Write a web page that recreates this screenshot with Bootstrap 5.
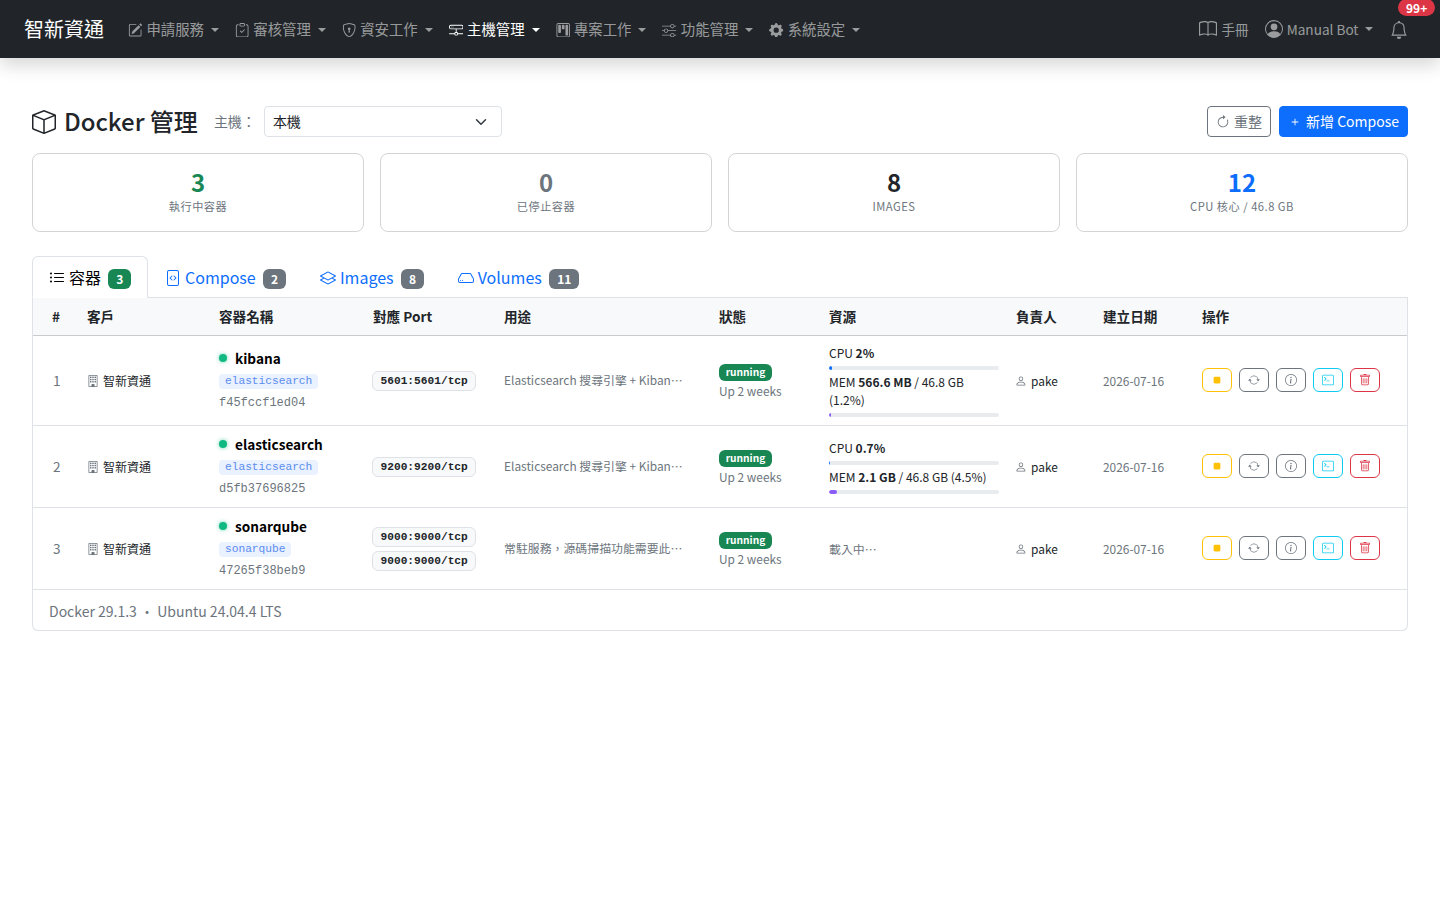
<!DOCTYPE html>
<html lang="zh-Hant">
<head>
  <meta charset="UTF-8">
  <title>Docker 管理</title>
  <meta name="viewport" content="width=device-width, initial-scale=1">
  <link href="https://cdn.jsdelivr.net/npm/bootstrap@5.3.0/dist/css/bootstrap.min.css" rel="stylesheet">
  <style>
    body { font-family: "Noto Sans CJK TC", "Noto Sans", sans-serif; color: #212529; }
    .ico { width: 1em; height: 1em; fill: currentColor; flex: none; vertical-align: -.125em; }

    .top-bar { height: 58px; padding: 0 24px; background: #212529; box-shadow: 0 8px 16px rgba(0,0,0,.15); }
    .top-bar .navbar-brand { font-size: 20px; margin-right: 16px; padding: 0; color: #fff; }
    .top-bar .nav-link { font-size: 14.4px; padding: 8px; color: rgba(255,255,255,.55); white-space: nowrap; }
    .top-bar .nav-link.active { color: #fff; }
    .top-bar .nav-link .ico { margin-right: .8px; }
    .top-bar .side-link { font-size: 13.6px; }
    .top-bar .side-link .ico { font-size: 18px; margin-right: 1px; vertical-align: -.2em; }
    .alert-count { position: absolute; top: -12px; left: 16px; font-size: 12px; font-weight: 700; padding: 1px 8px; line-height: 15px; border-radius: 10px; background: #dc3545; color: #fff; }
    .bell-wrap { position: relative; padding: 8px; margin-left: 1px; color: rgba(255,255,255,.55); font-size: 18px; line-height: 1; }

    .page-main { padding: 48px 32px 0; }
    .page-title { font-size: 24px; font-weight: 500; margin: -2px 0 0; line-height: 31px; }
    .page-title .ico { margin-right: 2.5px; }
    .host-label { font-size: 14px; color: #6c757d; margin: 0 8px 0 16px; }
    .host-select { width: 238px; }
    .btn-ico { font-size: 14px; margin-right: 4px; }
    .stat-box { border: 1px solid #d3d4d5; border-radius: 8px; text-align: center; height: 79px; padding-top: 13px; }
    .stat-num { font-size: 24px; font-weight: 700; line-height: 30px; }
    .stat-label { font-size: 11.2px; letter-spacing: .5px; color: #6c757d; line-height: 16px; margin-top: 1px; }

    .nav-tabs .nav-link { padding: 8px 16px; }
    .nav-tabs .nav-link .ico { margin-right: .3px; }

    .panel-box { border: 1px solid #dee2e6; border-top: 0; border-radius: 0 0 6px 6px; }
    .ctable { table-layout: fixed; width: 100%; margin: 0; font-size: 11.9px; }
    .ctable th { background: #f8f9fa; font-size: 13.6px; font-weight: 700; padding: 8px 12px; border-bottom: 1px solid #c9cccf; line-height: 21px; white-space: nowrap; }
    .ctable td { padding: 8px 12px; vertical-align: middle; border-bottom: 1px solid #dee2e6; }
    .ctable th:first-child { padding-left: 19px; }
    .ctable td:first-child { padding-left: 20px; }
    .ctable td.state-cell { padding-top: 10px; }
    .ctable td.use-cell, .ctable td.act-cell { padding-bottom: 10px; }
    .c1 { width: 42px; } .c2 { width: 132px; } .c3 { width: 154px; } .c4 { width: 131px; } .c5 { width: 215px; }
    .c6 { width: 110px; } .c7 { width: 187px; } .c8 { width: 87px; } .c9 { width: 99px; }
    .row-no { font-size: 13.6px; color: #6c757d; }
    .client-cell { font-size: 12px; }
    .client-cell .ico { color: #6c757d; margin-right: 4px; }
    .run-dot { width: 8px; height: 8px; border-radius: 50%; background: #10b981; box-shadow: 0 0 4px rgba(16,185,129,.6); margin-right: 8px; }
    .svc-name { font-size: 13.6px; font-weight: 700; line-height: 20px; color: #000; margin-bottom: 2px; }
    .svc-tag { display: inline-block; font-family: "Liberation Mono", monospace; font-size: 11.2px; line-height: 15px; padding: 0 6px; border-radius: 4px; background: #eaf1ff; color: #5b8def; }
    .svc-id { font-family: "Liberation Mono", monospace; font-size: 12px; color: #6c757d; line-height: 20px; margin-top: 4px; }
    .port-tag { display: block; width: fit-content; margin-left: -1px; font-family: "Liberation Mono", monospace; font-size: 11.2px; font-weight: 700; line-height: 18px; padding: 0 7.5px; border: 1px solid #dee2e6; border-radius: 6px; background: #f8f9fa; }
    .port-tag + .port-tag { margin-top: 4px; }
    .use-text { max-width: 180px; color: #6c757d; }
    .state-tag { font-size: 10.2px; }
    .up-text { color: #6c757d; line-height: 20px; }
    .res-wrap { width: 170px; font-size: 12px; line-height: 18px; }
    .res-bar { height: 4px; background: #e9ecef; border-radius: 2px; margin: 4px 0 3px; overflow: hidden; }
    .res-bar:last-child { margin-bottom: 0; }
    .res-bar > div { height: 100%; border-radius: 2px; }
    .fill-cpu { background: #0d6efd; }
    .fill-mem { background: #8b5cf6; }
    .loading-text { color: #6c757d; }
    .person-cell .ico { color: #6c757d; margin-left: -1px; margin-right: 1.5px; }
    .date-text { color: #6c757d; }
    .act-group { gap: 7px; }
    .act-btn { width: 30px; height: 24px; padding: 0; display: flex; align-items: center; justify-content: center; font-size: 12px; border-radius: 6px; }
    .panel-foot { padding: 11px 16px 9px; font-size: 14px; line-height: 20px; color: #6c757d; }
  </style>
</head>
<body>
  <!-- icon sprite -->
  <svg class="d-none" xmlns="http://www.w3.org/2000/svg">
    <symbol id="i-pencil" viewBox="0 0 16 16"><path d="M15.502 1.94a.5.5 0 0 1 0 .706L14.459 3.69l-2-2L13.502.646a.5.5 0 0 1 .707 0l1.293 1.293zm-1.75 2.456-2-2L4.939 9.21a.5.5 0 0 0-.121.196l-.805 2.414a.25.25 0 0 0 .316.316l2.414-.805a.5.5 0 0 0 .196-.12l6.813-6.814z"/><path d="M1 13.5A1.5 1.5 0 0 0 2.5 15h11a1.5 1.5 0 0 0 1.5-1.5v-6a.5.5 0 0 0-1 0v6a.5.5 0 0 1-.5.5h-11a.5.5 0 0 1-.5-.5v-11a.5.5 0 0 1 .5-.5H9a.5.5 0 0 0 0-1H2.5A1.5 1.5 0 0 0 1 2.5z"/></symbol>
    <symbol id="i-clip" viewBox="0 0 16 16"><path d="M10.854 7.146a.5.5 0 0 1 0 .708l-3 3a.5.5 0 0 1-.708 0l-1.5-1.5a.5.5 0 1 1 .708-.708L7.5 9.793l2.646-2.647a.5.5 0 0 1 .708 0"/><path d="M4 1.5H3a2 2 0 0 0-2 2V14a2 2 0 0 0 2 2h10a2 2 0 0 0 2-2V3.5a2 2 0 0 0-2-2h-1v1h1a1 1 0 0 1 1 1V14a1 1 0 0 1-1 1H3a1 1 0 0 1-1-1V3.5a1 1 0 0 1 1-1h1z"/><path d="M9.5 1a.5.5 0 0 1 .5.5v1a.5.5 0 0 1-.5.5h-3a.5.5 0 0 1-.5-.5v-1a.5.5 0 0 1 .5-.5zm-3-1A1.5 1.5 0 0 0 5 1.5v1A1.5 1.5 0 0 0 6.5 4h3A1.5 1.5 0 0 0 11 2.5v-1A1.5 1.5 0 0 0 9.5 0z"/></symbol>
    <symbol id="i-shield" viewBox="0 0 16 16"><path d="M5.338 1.59a61 61 0 0 0-2.837.856.48.48 0 0 0-.328.39c-.554 4.157.726 7.19 2.253 9.188a10.7 10.7 0 0 0 2.287 2.233c.346.244.652.42.893.533q.18.085.293.118a1 1 0 0 0 .101.025 1 1 0 0 0 .1-.025q.114-.034.294-.118c.24-.113.547-.29.893-.533a10.7 10.7 0 0 0 2.287-2.233c1.527-1.997 2.807-5.031 2.253-9.188a.48.48 0 0 0-.328-.39c-.651-.213-1.75-.56-2.837-.855C9.552 1.29 8.531 1.067 8 1.067c-.53 0-1.552.223-2.662.524zM5.072.56C6.157.265 7.31 0 8 0s1.843.265 2.928.56c1.11.3 2.229.655 2.887.87a1.54 1.54 0 0 1 1.044 1.262c.596 4.477-.787 7.795-2.465 9.99a11.8 11.8 0 0 1-2.517 2.453 7 7 0 0 1-1.048.625c-.28.132-.581.24-.829.24s-.548-.108-.829-.24a7 7 0 0 1-1.048-.625 11.8 11.8 0 0 1-2.517-2.453C1.928 10.487.545 7.169 1.141 2.692A1.54 1.54 0 0 1 2.185 1.43 63 63 0 0 1 5.072.56"/><path d="M9.5 6.5a1.5 1.5 0 0 1-1 1.415l.385 1.99a.5.5 0 0 1-.491.595h-.788a.5.5 0 0 1-.49-.595l.384-1.99a1.5 1.5 0 1 1 2-1.415"/></symbol>
    <symbol id="i-hddnet" viewBox="0 0 16 16"><path d="M4.5 5a.5.5 0 1 0 0-1 .5.5 0 0 0 0 1M3 4.5a.5.5 0 1 1-1 0 .5.5 0 0 1 1 0"/><path d="M0 4a2 2 0 0 1 2-2h12a2 2 0 0 1 2 2v1a2 2 0 0 1-2 2H8.5v3a1.5 1.5 0 0 1 1.5 1.5h5.5a.5.5 0 0 1 0 1H10A1.5 1.5 0 0 1 8.5 14h-1A1.5 1.5 0 0 1 6 12.5H.5a.5.5 0 0 1 0-1H6A1.5 1.5 0 0 1 7.5 10V7H2a2 2 0 0 1-2-2zm1 0v1a1 1 0 0 0 1 1h12a1 1 0 0 0 1-1V4a1 1 0 0 0-1-1H2a1 1 0 0 0-1 1m6 7.5v1a.5.5 0 0 0 .5.5h1a.5.5 0 0 0 .5-.5v-1a.5.5 0 0 0-.5-.5h-1a.5.5 0 0 0-.5.5"/></symbol>
    <symbol id="i-kanban" viewBox="0 0 16 16"><path d="M13.5 1a1 1 0 0 1 1 1v12a1 1 0 0 1-1 1h-11a1 1 0 0 1-1-1V2a1 1 0 0 1 1-1zm-11-1a2 2 0 0 0-2 2v12a2 2 0 0 0 2 2h11a2 2 0 0 0 2-2V2a2 2 0 0 0-2-2z"/><path d="M6.5 3a1 1 0 0 1 1-1h1a1 1 0 0 1 1 1v3a1 1 0 0 1-1 1h-1a1 1 0 0 1-1-1zm-4 0a1 1 0 0 1 1-1h1a1 1 0 0 1 1 1v7a1 1 0 0 1-1 1h-1a1 1 0 0 1-1-1zm8 0a1 1 0 0 1 1-1h1a1 1 0 0 1 1 1v10a1 1 0 0 1-1 1h-1a1 1 0 0 1-1-1z"/></symbol>
    <symbol id="i-sliders" viewBox="0 0 16 16"><path d="M11.5 2a1.5 1.5 0 1 0 0 3 1.5 1.5 0 0 0 0-3M9.05 3a2.5 2.5 0 0 1 4.9 0H16v1h-2.05a2.5 2.5 0 0 1-4.9 0H0V3zM4.5 7a1.5 1.5 0 1 0 0 3 1.5 1.5 0 0 0 0-3M2.05 8a2.5 2.5 0 0 1 4.9 0H16v1H6.95a2.5 2.5 0 0 1-4.9 0H0V8zm9.45 4a1.5 1.5 0 1 0 0 3 1.5 1.5 0 0 0 0-3m-2.45 1a2.5 2.5 0 0 1 4.9 0H16v1h-2.05a2.5 2.5 0 0 1-4.9 0H0v-1z"/></symbol>
    <symbol id="i-gear" viewBox="0 0 16 16"><path d="M9.405 1.05c-.413-1.4-2.397-1.4-2.81 0l-.1.34a1.464 1.464 0 0 1-2.105.872l-.31-.17c-1.283-.698-2.686.705-1.987 1.987l.169.311c.446.82.023 1.841-.872 2.105l-.34.1c-1.4.413-1.4 2.397 0 2.81l.34.1a1.464 1.464 0 0 1 .872 2.105l-.17.31c-.698 1.283.705 2.686 1.987 1.987l.311-.169a1.464 1.464 0 0 1 2.105.872l.1.34c.413 1.4 2.397 1.4 2.81 0l.1-.34a1.464 1.464 0 0 1 2.105-.872l.31.17c1.283.698 2.686-.705 1.987-1.987l-.169-.311a1.464 1.464 0 0 1 .872-2.105l.34-.1c1.4-.413 1.4-2.397 0-2.81l-.34-.1a1.464 1.464 0 0 1-.872-2.105l.17-.31c.698-1.283-.705-2.686-1.987-1.987l-.311.169a1.464 1.464 0 0 1-2.105-.872zM8 10.93a2.929 2.929 0 1 1 0-5.86 2.929 2.929 0 0 1 0 5.858z"/></symbol>
    <symbol id="i-book" viewBox="0 0 16 16"><path d="M1 2.828c.885-.37 2.154-.769 3.388-.893 1.33-.134 2.458.063 3.112.752v9.746c-.935-.53-2.12-.603-3.213-.493-1.18.12-2.37.461-3.287.811zm7.5-.141c.654-.689 1.782-.886 3.112-.752 1.234.124 2.503.523 3.388.893v9.923c-.918-.35-2.107-.692-3.287-.81-1.094-.111-2.278-.039-3.213.492zM8 1.783C7.015.936 5.587.81 4.287.94c-1.514.153-3.042.672-3.994 1.105A.5.5 0 0 0 0 2.5v11a.5.5 0 0 0 .707.455c.882-.4 2.303-.881 3.68-1.02 1.409-.142 2.59.087 3.223.877a.5.5 0 0 0 .78 0c.633-.79 1.814-1.019 3.222-.877 1.378.139 2.8.62 3.681 1.02A.5.5 0 0 0 16 13.5v-11a.5.5 0 0 0-.293-.455c-.952-.433-2.48-.952-3.994-1.105C10.413.809 8.985.936 8 1.783"/></symbol>
    <symbol id="i-user" viewBox="0 0 16 16"><path d="M11 6a3 3 0 1 1-6 0 3 3 0 0 1 6 0"/><path d="M0 8a8 8 0 1 1 16 0A8 8 0 0 1 0 8m8-7a7 7 0 0 0-5.468 11.37C3.242 11.226 4.805 10 8 10s4.757 1.225 5.468 2.37A7 7 0 0 0 8 1"/></symbol>
    <symbol id="i-bell" viewBox="0 0 16 16"><path d="M8 16a2 2 0 0 0 2-2H6a2 2 0 0 0 2 2M8 1.918l-.797.161A4 4 0 0 0 4 6c0 .628-.134 2.197-.459 3.742-.16.767-.376 1.566-.663 2.258h10.244c-.287-.692-.502-1.49-.663-2.258C12.134 8.197 12 6.628 12 6a4 4 0 0 0-3.203-3.92zM14.22 12c.223.447.481.801.78 1H1c.299-.199.557-.553.78-1C2.68 10.2 3 6.88 3 6c0-2.42 1.72-4.44 4.005-4.901a1 1 0 1 1 1.99 0A5 5 0 0 1 13 6c0 .88.32 4.2 1.22 6"/></symbol>
    <symbol id="i-box" viewBox="0 0 16 16"><path d="M8.186 1.113a.5.5 0 0 0-.372 0L1.846 3.5 8 5.961 14.154 3.5zM15 4.239l-6.5 2.6v7.922l6.5-2.6V4.24zM7.5 14.762V6.838L1 4.239v7.925zM7.443.184a1.5 1.5 0 0 1 1.114 0l7.129 2.852A.5.5 0 0 1 16 3.5v8.662a1 1 0 0 1-.629.928l-7.185 2.874a.5.5 0 0 1-.372 0L.63 13.09a1 1 0 0 1-.63-.928V3.5a.5.5 0 0 1 .314-.464z"/></symbol>
    <symbol id="i-clock" viewBox="0 0 16 16"><path d="M8 3a5 5 0 1 0 4.546 2.914.5.5 0 0 1 .908-.417A6 6 0 1 1 8 2z"/><path d="M8 4.466V.534a.25.25 0 0 1 .41-.192l2.36 1.966c.12.1.12.284 0 .384L8.41 4.658A.25.25 0 0 1 8 4.466"/></symbol>
    <symbol id="i-plus" viewBox="0 0 16 16"><path d="M8 4a.5.5 0 0 1 .5.5v3h3a.5.5 0 0 1 0 1h-3v3a.5.5 0 0 1-1 0v-3h-3a.5.5 0 0 1 0-1h3v-3A.5.5 0 0 1 8 4"/></symbol>
    <symbol id="i-list" viewBox="0 0 16 16"><path d="M5 11.5a.5.5 0 0 1 .5-.5h9a.5.5 0 0 1 0 1h-9a.5.5 0 0 1-.5-.5m0-4a.5.5 0 0 1 .5-.5h9a.5.5 0 0 1 0 1h-9a.5.5 0 0 1-.5-.5m0-4a.5.5 0 0 1 .5-.5h9a.5.5 0 0 1 0 1h-9a.5.5 0 0 1-.5-.5m-3 1a1 1 0 1 0 0-2 1 1 0 0 0 0 2m0 4a1 1 0 1 0 0-2 1 1 0 0 0 0 2m0 4a1 1 0 1 0 0-2 1 1 0 0 0 0 2"/></symbol>
    <symbol id="i-filecode" viewBox="0 0 16 16"><path d="M6.646 5.646a.5.5 0 1 1 .708.708L5.707 8l1.647 1.646a.5.5 0 0 1-.708.708l-2-2a.5.5 0 0 1 0-.708zm2.708 0a.5.5 0 1 0-.708.708L10.293 8 8.646 9.646a.5.5 0 0 0 .708.708l2-2a.5.5 0 0 0 0-.708z"/><path d="M2 2a2 2 0 0 1 2-2h8a2 2 0 0 1 2 2v12a2 2 0 0 1-2 2H4a2 2 0 0 1-2-2zm10-1H4a1 1 0 0 0-1 1v12a1 1 0 0 0 1 1h8a1 1 0 0 0 1-1V2a1 1 0 0 0-1-1"/></symbol>
    <symbol id="i-layers" viewBox="0 0 16 16"><path d="M8.235 1.559a.5.5 0 0 0-.47 0l-7.5 4a.5.5 0 0 0 0 .882L3.188 8 .264 9.559a.5.5 0 0 0 0 .882l7.5 4a.5.5 0 0 0 .47 0l7.5-4a.5.5 0 0 0 0-.882L12.813 8l2.922-1.559a.5.5 0 0 0 0-.882zm3.515 7.008L14.438 10 8 13.433 1.562 10 4.25 8.567l3.515 1.874a.5.5 0 0 0 .47 0zM8 9.433 1.562 6 8 2.567 14.438 6z"/></symbol>
    <symbol id="i-hdd" viewBox="0 0 16 16"><path d="M4.5 11a.5.5 0 1 0 0-1 .5.5 0 0 0 0 1M3 10.5a.5.5 0 1 1-1 0 .5.5 0 0 1 1 0"/><path fill-rule="evenodd" d="M16 11a2 2 0 0 1-2 2H2a2 2 0 0 1-2-2V9.51c0-.418.105-.83.305-1.197l2.472-4.531A1.5 1.5 0 0 1 4.094 3h7.812a1.5 1.5 0 0 1 1.317.782l2.472 4.53c.2.368.305.78.305 1.198zM3.655 4.26 1.592 8.043Q1.79 8 2 8h12c.14 0 .278.014.408.042L12.345 4.26a.5.5 0 0 0-.439-.26H4.094a.5.5 0 0 0-.44.26zM1 9v2a1 1 0 0 0 1 1h12a1 1 0 0 0 1-1V9a1 1 0 0 0-1-1H2a1 1 0 0 0-1 1"/></symbol>
    <symbol id="i-building" viewBox="0 0 16 16"><path d="M4 2.5a.5.5 0 0 1 .5-.5h1a.5.5 0 0 1 .5.5v1a.5.5 0 0 1-.5.5h-1a.5.5 0 0 1-.5-.5zm3 0a.5.5 0 0 1 .5-.5h1a.5.5 0 0 1 .5.5v1a.5.5 0 0 1-.5.5h-1a.5.5 0 0 1-.5-.5zm3.5-.5a.5.5 0 0 0-.5.5v1a.5.5 0 0 0 .5.5h1a.5.5 0 0 0 .5-.5v-1a.5.5 0 0 0-.5-.5zM4 5.5a.5.5 0 0 1 .5-.5h1a.5.5 0 0 1 .5.5v1a.5.5 0 0 1-.5.5h-1a.5.5 0 0 1-.5-.5zM7.5 5a.5.5 0 0 0-.5.5v1a.5.5 0 0 0 .5.5h1a.5.5 0 0 0 .5-.5v-1a.5.5 0 0 0-.5-.5zm2.5.5a.5.5 0 0 1 .5-.5h1a.5.5 0 0 1 .5.5v1a.5.5 0 0 1-.5.5h-1a.5.5 0 0 1-.5-.5zM4.5 8a.5.5 0 0 0-.5.5v1a.5.5 0 0 0 .5.5h1a.5.5 0 0 0 .5-.5v-1a.5.5 0 0 0-.5-.5zm2.5.5a.5.5 0 0 1 .5-.5h1a.5.5 0 0 1 .5.5v1a.5.5 0 0 1-.5.5h-1a.5.5 0 0 1-.5-.5zm3.5-.5a.5.5 0 0 0-.5.5v1a.5.5 0 0 0 .5.5h1a.5.5 0 0 0 .5-.5v-1a.5.5 0 0 0-.5-.5z"/><path d="M2 1a1 1 0 0 1 1-1h10a1 1 0 0 1 1 1v14a1 1 0 0 1-1 1H3a1 1 0 0 1-1-1zm11 0H3v14h3v-2.5a.5.5 0 0 1 .5-.5h3a.5.5 0 0 1 .5.5V15h3z"/></symbol>
    <symbol id="i-person" viewBox="0 0 16 16"><path d="M8 8a3 3 0 1 0 0-6 3 3 0 0 0 0 6m2-3a2 2 0 1 1-4 0 2 2 0 0 1 4 0m4 8c0 1-1 1-1 1H3s-1 0-1-1 1-4 6-4 6 3 6 4m-1-.004c-.001-.246-.154-.986-.832-1.664C11.516 10.68 10.289 10 8 10s-3.516.68-4.168 1.332c-.678.678-.83 1.418-.832 1.664z"/></symbol>
    <symbol id="i-stop" viewBox="0 0 16 16"><path d="M5 3.5h6A1.5 1.5 0 0 1 12.5 5v6a1.5 1.5 0 0 1-1.5 1.5H5A1.5 1.5 0 0 1 3.5 11V5A1.5 1.5 0 0 1 5 3.5"/></symbol>
    <symbol id="i-repeat" viewBox="0 0 16 16"><path d="M11.534 7h3.932a.25.25 0 0 1 .192.41l-1.966 2.36a.25.25 0 0 1-.384 0l-1.966-2.36a.25.25 0 0 1 .192-.41m-11 2h3.932a.25.25 0 0 0 .192-.41L2.692 6.23a.25.25 0 0 0-.384 0L.342 8.59A.25.25 0 0 0 .534 9"/><path d="M8 3c-1.552 0-2.94.707-3.857 1.818a.5.5 0 1 1-.771-.636A6.002 6.002 0 0 1 13.917 7H12.9A5 5 0 0 0 8 3M3.1 9a5.002 5.002 0 0 0 8.757 2.182.5.5 0 1 1 .771.636A6.002 6.002 0 0 1 2.083 9z"/></symbol>
    <symbol id="i-info" viewBox="0 0 16 16"><path d="M8 15A7 7 0 1 1 8 1a7 7 0 0 1 0 14m0 1A8 8 0 1 0 8 0a8 8 0 0 0 0 16"/><path d="m8.93 6.588-2.29.287-.082.38.45.083c.294.07.352.176.288.469l-.738 3.468c-.194.897.105 1.319.808 1.319.545 0 1.178-.252 1.465-.598l.088-.416c-.2.176-.492.246-.686.246-.275 0-.375-.193-.304-.533zM9 4.5a1 1 0 1 1-2 0 1 1 0 0 1 2 0"/></symbol>
    <symbol id="i-term" viewBox="0 0 16 16"><path d="M6 9a.5.5 0 0 1 .5-.5h3a.5.5 0 0 1 0 1h-3A.5.5 0 0 1 6 9M3.854 4.146a.5.5 0 1 0-.708.708L4.793 6.5 3.146 8.146a.5.5 0 1 0 .708.708l2-2a.5.5 0 0 0 0-.708z"/><path d="M2 1a2 2 0 0 0-2 2v10a2 2 0 0 0 2 2h12a2 2 0 0 0 2-2V3a2 2 0 0 0-2-2zm12 1a1 1 0 0 1 1 1v10a1 1 0 0 1-1 1H2a1 1 0 0 1-1-1V3a1 1 0 0 1 1-1z"/></symbol>
    <symbol id="i-trash" viewBox="0 0 16 16"><path d="M5.5 5.5A.5.5 0 0 1 6 6v6a.5.5 0 0 1-1 0V6a.5.5 0 0 1 .5-.5m2.5 0a.5.5 0 0 1 .5.5v6a.5.5 0 0 1-1 0V6a.5.5 0 0 1 .5-.5m3 .5a.5.5 0 0 0-1 0v6a.5.5 0 0 0 1 0z"/><path d="M14.5 3a1 1 0 0 1-1 1H13v9a2 2 0 0 1-2 2H5a2 2 0 0 1-2-2V4h-.5a1 1 0 0 1-1-1V2a1 1 0 0 1 1-1H6a1 1 0 0 1 1-1h2a1 1 0 0 1 1 1h3.5a1 1 0 0 1 1 1zM4.118 4 4 4.059V13a1 1 0 0 0 1 1h6a1 1 0 0 0 1-1V4.059L11.882 4zM2.5 3h11V2h-11z"/></symbol>
  </svg>

  <nav class="navbar navbar-expand top-bar">
    <a class="navbar-brand" href="#">智新資通</a>
    <ul class="navbar-nav me-auto">
      <li class="nav-item"><a class="nav-link dropdown-toggle" href="#"><svg class="ico"><use href="#i-pencil"/></svg> 申請服務 </a></li>
      <li class="nav-item"><a class="nav-link dropdown-toggle" href="#"><svg class="ico"><use href="#i-clip"/></svg> 審核管理 </a></li>
      <li class="nav-item"><a class="nav-link dropdown-toggle" href="#"><svg class="ico"><use href="#i-shield"/></svg> 資安工作 </a></li>
      <li class="nav-item"><a class="nav-link dropdown-toggle active" href="#"><svg class="ico"><use href="#i-hddnet"/></svg> 主機管理 </a></li>
      <li class="nav-item"><a class="nav-link dropdown-toggle" href="#"><svg class="ico"><use href="#i-kanban"/></svg> 專案工作 </a></li>
      <li class="nav-item"><a class="nav-link dropdown-toggle" href="#"><svg class="ico"><use href="#i-sliders"/></svg> 功能管理 </a></li>
      <li class="nav-item"><a class="nav-link dropdown-toggle" href="#"><svg class="ico"><use href="#i-gear"/></svg> 系統設定 </a></li>
    </ul>
    <ul class="navbar-nav align-items-center">
      <li class="nav-item"><a class="nav-link side-link" href="#"><svg class="ico"><use href="#i-book"/></svg> 手冊</a></li>
      <li class="nav-item"><a class="nav-link side-link dropdown-toggle" href="#"><svg class="ico"><use href="#i-user"/></svg> Manual Bot </a></li>
      <li class="nav-item bell-wrap"><svg class="ico"><use href="#i-bell"/></svg><span class="alert-count">99+</span></li>
    </ul>
  </nav>

  <main class="page-main">
    <div class="d-flex align-items-center justify-content-between mb-3">
      <div class="d-flex align-items-center">
        <h1 class="page-title"><svg class="ico"><use href="#i-box"/></svg> Docker 管理</h1>
        <span class="host-label">主機：</span>
        <select class="form-select form-select-sm host-select"><option>本機</option></select>
      </div>
      <div class="d-flex gap-2">
        <button class="btn btn-sm btn-outline-secondary"><svg class="ico btn-ico"><use href="#i-clock"/></svg>重整</button>
        <button class="btn btn-sm btn-primary"><svg class="ico btn-ico"><use href="#i-plus"/></svg>新增 Compose</button>
      </div>
    </div>

    <div class="row g-3 mb-4">
      <div class="col-3"><div class="stat-box"><div class="stat-num text-success">3</div><div class="stat-label">執行中容器</div></div></div>
      <div class="col-3"><div class="stat-box"><div class="stat-num text-secondary">0</div><div class="stat-label">已停止容器</div></div></div>
      <div class="col-3"><div class="stat-box"><div class="stat-num">8</div><div class="stat-label">IMAGES</div></div></div>
      <div class="col-3"><div class="stat-box"><div class="stat-num text-primary">12</div><div class="stat-label">CPU 核心 / 46.8 GB</div></div></div>
    </div>

    <ul class="nav nav-tabs">
      <li class="nav-item"><a class="nav-link active" href="#"><svg class="ico"><use href="#i-list"/></svg> 容器 <span class="badge bg-success ms-1">3</span></a></li>
      <li class="nav-item"><a class="nav-link" href="#"><svg class="ico"><use href="#i-filecode"/></svg> Compose <span class="badge bg-secondary ms-1">2</span></a></li>
      <li class="nav-item"><a class="nav-link" href="#"><svg class="ico"><use href="#i-layers"/></svg> Images <span class="badge bg-secondary ms-1">8</span></a></li>
      <li class="nav-item"><a class="nav-link" href="#"><svg class="ico"><use href="#i-hdd"/></svg> Volumes <span class="badge bg-secondary ms-1">11</span></a></li>
    </ul>

    <div class="panel-box">
      <table class="ctable">
        <thead>
          <tr>
            <th class="c1">#</th><th class="c2">客戶</th><th class="c3">容器名稱</th><th class="c4">對應 Port</th><th class="c5">用途</th>
            <th class="c6">狀態</th><th class="c7">資源</th><th class="c8">負責人</th><th class="c9">建立日期</th><th>操作</th>
          </tr>
        </thead>
        <tbody>
          <tr>
            <td class="row-no">1</td>
            <td class="client-cell"><svg class="ico"><use href="#i-building"/></svg>智新資通</td>
            <td>
              <div class="d-flex align-items-center svc-name"><span class="run-dot"></span>kibana</div>
              <span class="svc-tag">elasticsearch</span>
              <div class="svc-id">f45fccf1ed04</div>
            </td>
            <td><span class="port-tag">5601:5601/tcp</span></td>
            <td class="use-cell"><div class="text-truncate use-text">Elasticsearch 搜尋引擎 + Kibana 介面</div></td>
            <td class="state-cell"><span class="badge bg-success state-tag">running</span><div class="up-text">Up 2 weeks</div></td>
            <td>
              <div class="res-wrap">
                <div>CPU <b>2%</b></div>
                <div class="res-bar"><div class="fill-cpu" style="width:2%"></div></div>
                <div>MEM <b>566.6 MB</b> / 46.8 GB (1.2%)</div>
                <div class="res-bar"><div class="fill-mem" style="width:1.2%"></div></div>
              </div>
            </td>
            <td class="person-cell"><svg class="ico"><use href="#i-person"/></svg> pake</td>
            <td class="date-text">2026-07-16</td>
            <td class="act-cell">
              <div class="d-flex act-group">
                <button class="btn btn-outline-warning act-btn"><svg class="ico"><use href="#i-stop"/></svg></button>
                <button class="btn btn-outline-secondary act-btn"><svg class="ico"><use href="#i-repeat"/></svg></button>
                <button class="btn btn-outline-secondary act-btn"><svg class="ico"><use href="#i-info"/></svg></button>
                <button class="btn btn-outline-info act-btn"><svg class="ico"><use href="#i-term"/></svg></button>
                <button class="btn btn-outline-danger act-btn"><svg class="ico"><use href="#i-trash"/></svg></button>
              </div>
            </td>
          </tr>
          <tr>
            <td class="row-no">2</td>
            <td class="client-cell"><svg class="ico"><use href="#i-building"/></svg>智新資通</td>
            <td>
              <div class="d-flex align-items-center svc-name"><span class="run-dot"></span>elasticsearch</div>
              <span class="svc-tag">elasticsearch</span>
              <div class="svc-id">d5fb37696825</div>
            </td>
            <td><span class="port-tag">9200:9200/tcp</span></td>
            <td class="use-cell"><div class="text-truncate use-text">Elasticsearch 搜尋引擎 + Kibana 介面</div></td>
            <td class="state-cell"><span class="badge bg-success state-tag">running</span><div class="up-text">Up 2 weeks</div></td>
            <td>
              <div class="res-wrap">
                <div>CPU <b>0.7%</b></div>
                <div class="res-bar"><div class="fill-cpu" style="width:.7%"></div></div>
                <div>MEM <b>2.1 GB</b> / 46.8 GB (4.5%)</div>
                <div class="res-bar"><div class="fill-mem" style="width:4.5%"></div></div>
              </div>
            </td>
            <td class="person-cell"><svg class="ico"><use href="#i-person"/></svg> pake</td>
            <td class="date-text">2026-07-16</td>
            <td class="act-cell">
              <div class="d-flex act-group">
                <button class="btn btn-outline-warning act-btn"><svg class="ico"><use href="#i-stop"/></svg></button>
                <button class="btn btn-outline-secondary act-btn"><svg class="ico"><use href="#i-repeat"/></svg></button>
                <button class="btn btn-outline-secondary act-btn"><svg class="ico"><use href="#i-info"/></svg></button>
                <button class="btn btn-outline-info act-btn"><svg class="ico"><use href="#i-term"/></svg></button>
                <button class="btn btn-outline-danger act-btn"><svg class="ico"><use href="#i-trash"/></svg></button>
              </div>
            </td>
          </tr>
          <tr>
            <td class="row-no">3</td>
            <td class="client-cell"><svg class="ico"><use href="#i-building"/></svg>智新資通</td>
            <td>
              <div class="d-flex align-items-center svc-name"><span class="run-dot"></span>sonarqube</div>
              <span class="svc-tag">sonarqube</span>
              <div class="svc-id">47265f38beb9</div>
            </td>
            <td><span class="port-tag">9000:9000/tcp</span><span class="port-tag">9000:9000/tcp</span></td>
            <td class="use-cell"><div class="text-truncate use-text">常駐服務，源碼掃描功能需要此服務運作</div></td>
            <td class="state-cell"><span class="badge bg-success state-tag">running</span><div class="up-text">Up 2 weeks</div></td>
            <td class="loading-text">載入中⋯</td>
            <td class="person-cell"><svg class="ico"><use href="#i-person"/></svg> pake</td>
            <td class="date-text">2026-07-16</td>
            <td class="act-cell">
              <div class="d-flex act-group">
                <button class="btn btn-outline-warning act-btn"><svg class="ico"><use href="#i-stop"/></svg></button>
                <button class="btn btn-outline-secondary act-btn"><svg class="ico"><use href="#i-repeat"/></svg></button>
                <button class="btn btn-outline-secondary act-btn"><svg class="ico"><use href="#i-info"/></svg></button>
                <button class="btn btn-outline-info act-btn"><svg class="ico"><use href="#i-term"/></svg></button>
                <button class="btn btn-outline-danger act-btn"><svg class="ico"><use href="#i-trash"/></svg></button>
              </div>
            </td>
          </tr>
        </tbody>
      </table>
      <div class="panel-foot">Docker 29.1.3 • Ubuntu 24.04.4 LTS</div>
    </div>
  </main>

  <script src="https://cdn.jsdelivr.net/npm/bootstrap@5.3.0/dist/js/bootstrap.bundle.min.js"></script>
</body>
</html>
